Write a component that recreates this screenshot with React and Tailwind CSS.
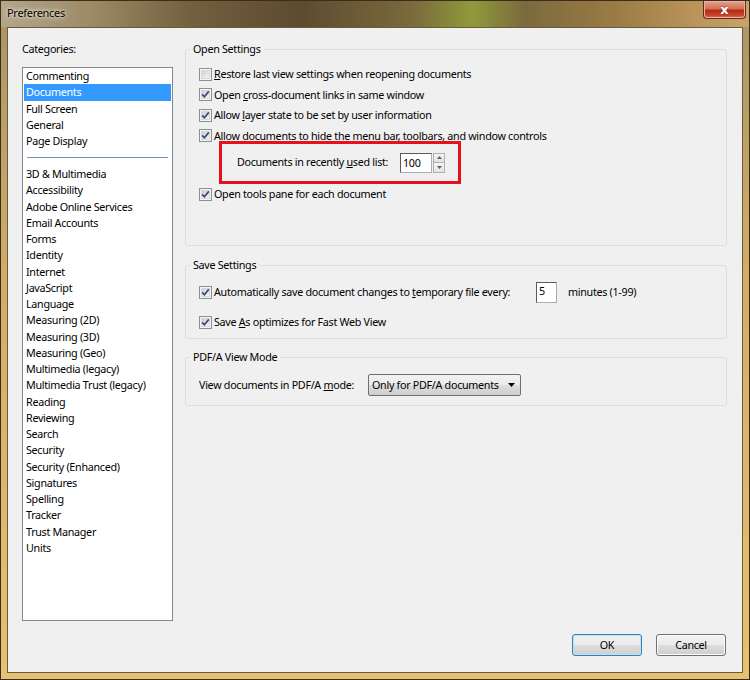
import React from "react";

const topCategories = ["Commenting", "Documents", "Full Screen", "General", "Page Display"];
const moreCategories = [
  "3D & Multimedia",
  "Accessibility",
  "Adobe Online Services",
  "Email Accounts",
  "Forms",
  "Identity",
  "Internet",
  "JavaScript",
  "Language",
  "Measuring (2D)",
  "Measuring (3D)",
  "Measuring (Geo)",
  "Multimedia (legacy)",
  "Multimedia Trust (legacy)",
  "Reading",
  "Reviewing",
  "Search",
  "Security",
  "Security (Enhanced)",
  "Signatures",
  "Spelling",
  "Tracker",
  "Trust Manager",
  "Units",
];

// Win7 style checkbox
function Checkbox({ checked }) {
  return (
    <svg width="13" height="13" viewBox="0 0 13 13" className="shrink-0">
      <defs>
        <linearGradient id="cbInner" x1="0" y1="0" x2="1" y2="1">
          <stop offset="0" stopColor="#cbcfd5" />
          <stop offset="1" stopColor="#f6f6f6" />
        </linearGradient>
      </defs>
      <rect x="0.5" y="0.5" width="12" height="12" fill="#f4f4f4" stroke="#8e8f8f" />
      <rect x="2.5" y="2.5" width="8" height="8" fill="url(#cbInner)" stroke="#d6d8db" />
      {checked && (
        <path d="M3.2 6.4 L5.4 8.8 L9.8 3.4" fill="none" stroke="#3b4a78" strokeWidth="1.7" />
      )}
    </svg>
  );
}

function CheckRow({ checked, children, className = "h-[20.5px]" }) {
  return (
    <div className={`flex items-center ${className}`}>
      <Checkbox checked={checked} />
      <span className="ml-[2px] whitespace-nowrap">{children}</span>
    </div>
  );
}

function Group({ title, className, children }) {
  return (
    <fieldset className={`border border-[#d5dfe5] rounded-[3px] px-[13px] ${className}`}>
      <legend className="-ml-[9px] px-[3px] leading-[16px]">{title}</legend>
      {children}
    </fieldset>
  );
}

function WinButton({ children, focused }) {
  return (
    <div
      className={`w-[70px] h-[22px] flex items-center justify-center rounded-[3px] border ${
        focused
          ? "border-[#3c7fb1] shadow-[inset_0_0_0_1px_#b8e3f8]"
          : "border-[#707070] shadow-[inset_0_0_0_1px_#fcfcfc]"
      } bg-[linear-gradient(180deg,#f2f2f2_0%,#ebebeb_48%,#dddddd_52%,#cfcfcf_100%)]`}
    >
      {children}
    </div>
  );
}

export default function App() {
  return (
    <div className="w-[750px] h-[680px] flex flex-col overflow-hidden font-['Noto_Sans',sans-serif] text-[10.75px] tracking-[-0.3px] text-black bg-[linear-gradient(180deg,#a89468_0%,#d0ad68_40%,#e6c173_100%)] border border-[#3a2e1a]">
      {/* Title bar */}
      <div className="h-[26px] shrink-0 flex items-start justify-between bg-[linear-gradient(90deg,#b3a68b_0%,#9d8a66_12%,#75603f_25%,#5d4b30_40%,#7a6a3c_55%,#8f9a3a_63%,#7b6a3d_70%,#9a7b45_82%,#b89258_92%,#c7a46a_100%)]">
        <span className="ml-[6px] mt-[5px] text-[11px] leading-[14px] [text-shadow:0_0_6px_#f3ead8,0_0_3px_#f3ead8]">
          Preferences
        </span>
        <div className="mr-[3px] w-[43px] h-[18px] rounded-b-[4px] border border-t-0 border-[#6d2419] flex items-center justify-center bg-[linear-gradient(180deg,#e4a38f_0%,#d5715a_45%,#b72a14_55%,#c9452b_85%,#e07b55_100%)] shadow-[inset_0_0_0_1px_#eab5a6]">
          <span className="text-white font-bold text-[13px] leading-none tracking-normal font-['DejaVu_Sans',sans-serif] [text-shadow:0_0_2px_#6d2419]">
            x
          </span>
        </div>
      </div>

      {/* Client area */}
      <div className="flex-1 mx-[6px] mb-[6px] border border-[#6a5a3c] bg-[#f0f0f0] flex flex-col">
        <div className="flex pt-[13px] pl-[14px]">
          {/* Categories */}
          <div className="w-[151px] shrink-0">
            <div className="leading-[16px]">Categories:</div>
            <div className="mt-[10px] h-[554px] border border-[#828790] bg-white p-[1px] pt-0">
              {topCategories.map((c) => (
                <div
                  key={c}
                  className={`h-[16.25px] leading-[16.25px] pl-[2px] whitespace-nowrap ${
                    c === "Documents" ? "bg-[#3399ff] text-white" : ""
                  }`}
                >
                  {c}
                </div>
              ))}
              <div className="h-[16.75px] flex items-center px-[3px]">
                <div className="h-px w-full bg-[#6f8fc0]" />
              </div>
              {moreCategories.map((c) => (
                <div key={c} className="h-[16.25px] leading-[16.25px] pl-[2px] whitespace-nowrap">
                  {c}
                </div>
              ))}
            </div>
          </div>

          {/* Settings */}
          <div className="ml-[12px] w-[542px] flex flex-col">
            <Group title="Open Settings" className="h-[205px] pt-[7px]">
              <CheckRow checked={false}>
                <u>R</u>estore last view settings when reopening documents
              </CheckRow>
              <CheckRow checked>
                Open <u>c</u>ross-document links in same window
              </CheckRow>
              <CheckRow checked>
                Allow <u>l</u>ayer state to be set by user information
              </CheckRow>
              <CheckRow checked>Allow documents to hide the menu bar, toolbars, and window controls</CheckRow>
              <div className="-mt-[5px] ml-[20px] w-[242px] h-[43px] border-[3px] border-[#e3121d] flex items-center pl-[15px]">
                <span className="whitespace-nowrap">
                  Documents in recently <u>u</u>sed list:
                </span>
                <div className="ml-auto w-[32px] h-[20px] border border-[#abadb3] border-t-[#5b5b5b] border-l-[#5b5b5b] bg-white pl-[2px] leading-[18px]">
                  100
                </div>
                <div className="ml-[1px] mr-[13px] w-[12px] h-[20px] flex flex-col">
                  <div className="flex-1 border border-[#b0b0b0] bg-[linear-gradient(180deg,#f6f6f6,#e2e2e2)] flex items-center justify-center">
                    <svg width="5" height="3" viewBox="0 0 5 3">
                      <path d="M0 3 L2.5 0 L5 3 Z" fill="#4d6185" />
                    </svg>
                  </div>
                  <div className="flex-1 border border-t-0 border-[#b0b0b0] bg-[linear-gradient(180deg,#f6f6f6,#e2e2e2)] flex items-center justify-center">
                    <svg width="5" height="3" viewBox="0 0 5 3">
                      <path d="M0 0 L2.5 3 L5 0 Z" fill="#4d6185" />
                    </svg>
                  </div>
                </div>
              </div>
              <CheckRow checked>Open tools pane for each document</CheckRow>
            </Group>

            <Group title="Save Settings" className="mt-[11px] h-[82px] pt-[7px]">
              <div className="flex items-center h-[24px]">
                <Checkbox checked />
                <span className="ml-[2px] whitespace-nowrap">
                  Automatically save document changes to <u>t</u>emporary file every:
                </span>
                <div className="ml-auto w-[21px] h-[21px] border border-[#abadb3] border-t-[#5b5b5b] border-l-[#5b5b5b] bg-white pl-[2px] leading-[17px]">
                  5
                </div>
                <span className="ml-[11px] w-[145px] whitespace-nowrap">minutes (1-99)</span>
              </div>
              <CheckRow checked className="h-[20px] mt-[8px]">
                Save <u>A</u>s optimizes for Fast Web View
              </CheckRow>
            </Group>

            <Group title="PDF/A View Mode" className="mt-[10px] h-[57px] pt-[9px]">
              <div className="flex items-center h-[22px]">
                <span className="whitespace-nowrap">
                  View documents in PDF/A <u>m</u>ode:
                </span>
                <div className="ml-auto mr-[192px] w-[153px] h-[22px] flex rounded-[2px] border border-[#707070] bg-[linear-gradient(180deg,#f2f2f2_0%,#ebebeb_48%,#dddddd_52%,#cfcfcf_100%)]">
                  <span className="flex-1 pl-[3px] leading-[20px] whitespace-nowrap">Only for PDF/A documents</span>
                  <div className="w-[17px] flex items-center justify-center">
                    <svg width="7" height="4" viewBox="0 0 7 4">
                      <path d="M0 0 L7 0 L3.5 4 Z" fill="#000" />
                    </svg>
                  </div>
                </div>
              </div>
            </Group>
          </div>
        </div>

        {/* Buttons */}
        <div className="mt-auto mb-[16px] mr-[16px] flex justify-end gap-[14px]">
          <WinButton focused>OK</WinButton>
          <WinButton>Cancel</WinButton>
        </div>
      </div>
    </div>
  );
}
